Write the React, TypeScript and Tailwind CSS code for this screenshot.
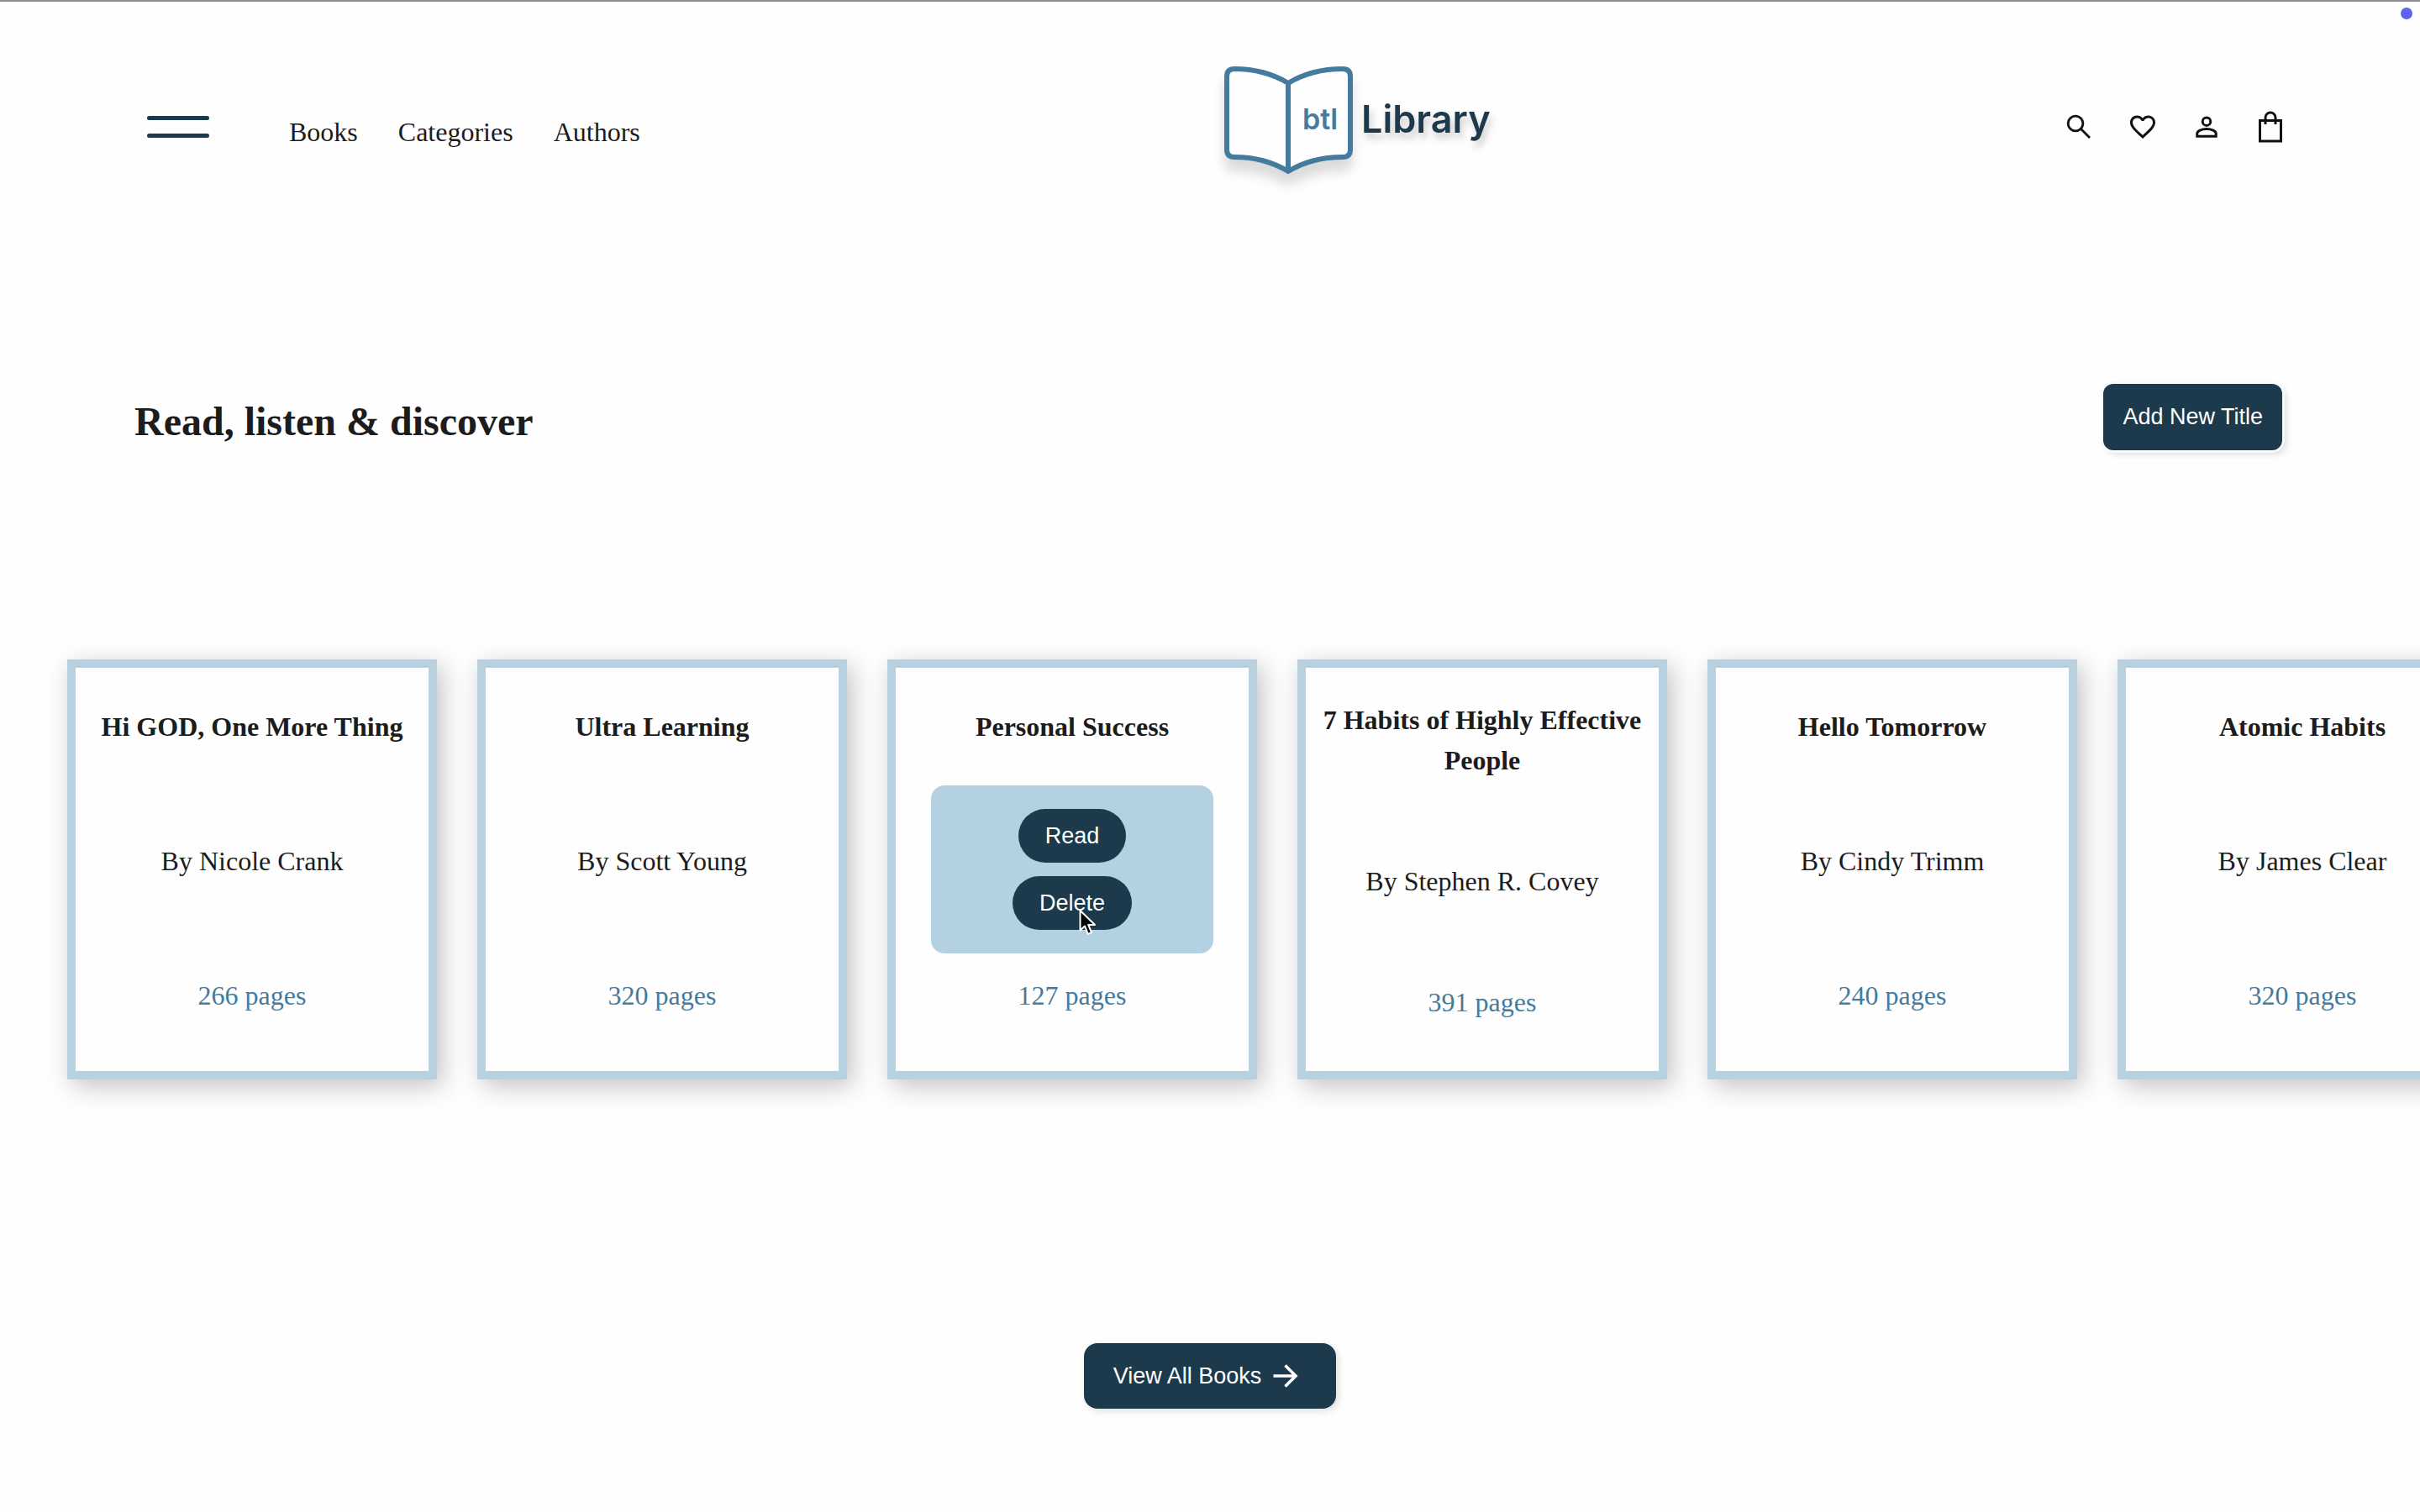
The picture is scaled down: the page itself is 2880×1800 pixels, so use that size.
import React from "react";

type Book = { title: string; author?: string; pages: number; active?: boolean };

const books: Book[] = [
  { title: "Hi GOD, One More Thing", author: "Nicole Crank", pages: 266 },
  { title: "Ultra Learning", author: "Scott Young", pages: 320 },
  { title: "Personal Success", pages: 127, active: true },
  { title: "7 Habits of Highly Effective People", author: "Stephen R. Covey", pages: 391 },
  { title: "Hello Tomorrow", author: "Cindy Trimm", pages: 240 },
  { title: "Atomic Habits", author: "James Clear", pages: 320 },
];

const navItems = ["Books", "Categories", "Authors"];

function Logo() {
  return (
    <a href="#home" aria-label="btl Library" className="ml-5 block">
      <svg width="324" height="170" viewBox="0 0 324 170" className="block overflow-visible">
        <g className="drop-shadow-[0_14px_7px_rgba(0,0,0,0.14)]">
          <path
            d="M77 33C59 22 38 16 13 16Q4 16 4 25V112Q4 121 13 121C38 121 59 127 77 138C95 127 116 121 142 121Q151 121 151 112V25Q151 16 142 16C116 16 95 22 77 33Z"
            fill="#fefefe"
            stroke="#457b9d"
            strokeWidth="6"
            strokeLinejoin="round"
          />
          <path d="M77 33V138" stroke="#457b9d" strokeWidth="6" />
        </g>
        <text x="94" y="88" fontSize="34" fontWeight="600" fill="#457b9d" className="font-['Inter',sans-serif]">
          btl
        </text>
        <text
          x="164"
          y="92"
          fontSize="45"
          fontWeight="600"
          fill="#1d3a4d"
          className="font-['Inter',sans-serif] drop-shadow-[3px_7px_4px_rgba(0,0,0,0.2)]"
        >
          Library
        </text>
      </svg>
    </a>
  );
}

function IconButton({ label, children }: { label: string; children: React.ReactNode }) {
  return (
    <button aria-label={label} className="flex size-10 items-center justify-center text-[#111]">
      {children}
    </button>
  );
}

function SearchIcon() {
  return (
    <svg width="38" height="38" viewBox="0 0 24 24" fill="none" stroke="currentColor" strokeWidth="1.8">
      <circle cx="9.5" cy="9.5" r="5.6" />
      <path d="M13.6 13.6L20.2 20.2" />
    </svg>
  );
}

function HeartIcon() {
  return (
    <svg width="36" height="36" viewBox="0 0 24 24" fill="currentColor">
      <path d="M16.5 3c-1.74 0-3.41.81-4.5 2.09C10.91 3.81 9.24 3 7.5 3 4.42 3 2 5.42 2 8.5c0 3.78 3.4 6.86 8.55 11.54L12 21.35l1.45-1.32C18.6 15.36 22 12.28 22 8.5 22 5.42 19.58 3 16.5 3zm-4.4 15.55l-.1.1-.1-.1C7.14 14.24 4 11.39 4 8.5 4 6.5 5.5 5 7.5 5c1.54 0 3.04.99 3.57 2.36h1.87C13.46 5.99 14.96 5 16.5 5c2 0 3.5 1.5 3.5 3.5 0 2.89-3.14 5.74-7.9 10.05z" />
    </svg>
  );
}

function PersonIcon() {
  return (
    <svg width="38" height="38" viewBox="0 0 24 24" fill="none" stroke="currentColor" strokeWidth="1.9">
      <circle cx="12" cy="8" r="3" />
      <path d="M4.9 19.1V17c0-2 3.6-3.4 7.1-3.4s7.1 1.4 7.1 3.4v2.1Z" />
    </svg>
  );
}

function BagIcon() {
  return (
    <svg width="28" height="38" viewBox="0 0 28 38" fill="none" stroke="currentColor" strokeWidth="3">
      <path d="M1.5 11.5H26.5V36H1.5Z" />
      <path d="M8 16V8a6 6 0 0 1 12 0V16" />
    </svg>
  );
}

function Cursor() {
  return (
    <svg
      width="22"
      height="33"
      viewBox="0 0 22 33"
      className="pointer-events-none absolute left-[176px] top-[147px]"
      aria-hidden="true"
    >
      <path
        d="M1.5 2V25.5L7 20.5L10.8 30L15 28.2L11.2 19H19Z"
        fill="#000"
        stroke="#fff"
        strokeWidth="2"
        strokeLinejoin="round"
      />
    </svg>
  );
}

function BookCard({ book }: { book: Book }) {
  return (
    <article className="relative flex h-[500px] w-[440px] shrink-0 flex-col items-center justify-around bg-[#fefefe] px-5 pb-5 text-center text-[32px] leading-[48px] shadow-[inset_0_0_0_10px_#b7d1e0,6px_8px_28px_rgba(0,0,0,0.24)]">
      <h2 className="font-bold">{book.title}</h2>
      <p className="min-h-12">{book.author && `By ${book.author}`}</p>
      <p className="text-[#457b9d]">{book.pages} pages</p>
      {book.active && (
        <div className="absolute inset-0 m-auto flex h-[200px] w-[336px] flex-col items-center justify-center gap-4 rounded-2xl bg-[#b4d1e2] font-['Liberation_Sans',Arial,sans-serif] text-[27px] leading-8 text-white">
          <button className="h-16 rounded-full bg-[#1d3a4d] px-8">Read</button>
          <button className="h-16 rounded-full bg-[#1d3a4d] px-8">Delete</button>
          <Cursor />
        </div>
      )}
    </article>
  );
}

export default function App() {
  return (
    <div className="relative min-h-screen overflow-x-hidden border-t-2 border-[#8e8e8e] bg-[#fefefe] font-['Liberation_Serif','Times_New_Roman',serif] text-[#1c1c1c]">
      <span className="absolute right-[9px] top-[7px] size-[14px] rounded-full bg-[#6360ee]" />

      <header className="flex items-center justify-between pl-[175px] pr-[158px] pt-16">
        <div className="flex items-center">
          <button aria-label="Menu" className="flex w-[74px] flex-col gap-4">
            <span className="h-[5px] w-full rounded-sm bg-[#1d3a4d]" />
            <span className="h-[5px] w-full rounded-sm bg-[#1d3a4d]" />
          </button>
          <nav className="ml-[95px] flex gap-12 pt-3 text-[32px] leading-[48px]">
            {navItems.map((item) => (
              <a key={item} href={`#${item.toLowerCase()}`}>
                {item}
              </a>
            ))}
          </nav>
        </div>
        <Logo />
        <div className="flex items-center gap-9">
          <IconButton label="Search">
            <SearchIcon />
          </IconButton>
          <IconButton label="Favourites">
            <HeartIcon />
          </IconButton>
          <IconButton label="Account">
            <PersonIcon />
          </IconButton>
          <IconButton label="Bag">
            <BagIcon />
          </IconButton>
        </div>
      </header>

      <main>
        <section className="mt-[218px] flex items-center justify-between pl-40 pr-[164px]">
          <h1 className="pt-3 text-[48px] font-bold leading-[72px]">Read, listen &amp; discover</h1>
          <button className="h-[79px] rounded-xl bg-[#1d3a4d] px-[23px] font-['Liberation_Sans',Arial,sans-serif] text-[27px] leading-8 text-white shadow-[0_0_0_3px_#f8fafd,4px_4px_8px_rgba(0,0,0,0.16)]">
            Add New Title
          </button>
        </section>

        <section aria-label="Books" className="mt-[203px] flex gap-12 overflow-hidden px-20 py-11">
          {books.map((book) => (
            <BookCard key={book.title} book={book} />
          ))}
        </section>

        <div className="mt-[270px] flex justify-center">
          <button className="flex h-[78px] items-center gap-[14px] rounded-2xl bg-[#1d3a4d] pl-[35px] pr-[45px] font-['Liberation_Sans',Arial,sans-serif] text-[27px] leading-8 text-white shadow-[3px_3px_8px_rgba(0,0,0,0.12)]">
            View All Books
            <svg width="30" height="30" viewBox="0 0 30 30" fill="none" stroke="currentColor" strokeWidth="3.6">
              <path d="M0.5 15H27M14.5 2.5L27 15L14.5 27.5" />
            </svg>
          </button>
        </div>
      </main>
    </div>
  );
}
